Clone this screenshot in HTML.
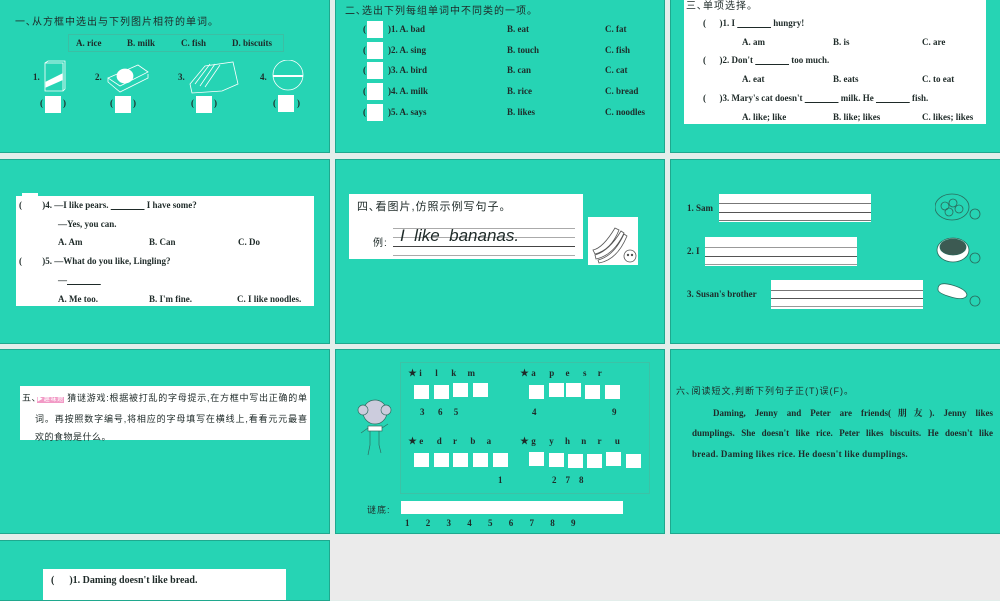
<!DOCTYPE html>
<html><head><meta charset="utf-8"><style>
*{margin:0;padding:0;box-sizing:border-box}
body{width:1000px;height:600px;background:#e3eeeb;position:relative;overflow:hidden;font-family:"Liberation Serif","Noto Serif CJK SC",serif;color:#1e2a28}
.s{position:absolute;background:#26d4b4;border:1px solid #1fa88e}
.a{position:absolute;white-space:nowrap}
.t{font-size:9px;font-weight:bold}
.c{font-family:"Liberation Sans","Noto Sans CJK SC",sans-serif;font-size:10px;letter-spacing:1px}
.w{position:absolute;background:#fff}
.b{position:absolute;background:#fff;width:16px;height:17px}
.sb{position:absolute;background:#fff;width:15px;height:14px}
.j{text-align:justify;text-align-last:justify}
</style></head><body>
<div style="position:absolute;left:330px;top:535px;width:670px;height:65px;background:#ebebeb"></div>
<div class="s" style="left:-1px;top:-1px;width:331px;height:154px"></div>
<div class="s" style="left:335px;top:-1px;width:330px;height:154px"></div>
<div class="s" style="left:670px;top:-1px;width:331px;height:154px"></div>
<div class="s" style="left:-1px;top:159px;width:331px;height:185px"></div>
<div class="s" style="left:335px;top:159px;width:330px;height:185px"></div>
<div class="s" style="left:670px;top:159px;width:331px;height:185px"></div>
<div class="s" style="left:-1px;top:349px;width:331px;height:185px"></div>
<div class="s" style="left:335px;top:349px;width:330px;height:185px"></div>
<div class="s" style="left:670px;top:349px;width:331px;height:185px"></div>
<div class="s" style="left:-1px;top:540px;width:331px;height:61px"></div>

<!-- slide 1 -->
<div class="a c" style="left:15px;top:13px">一､从方框中选出与下列图片相符的单词。</div>
<div class="a" style="left:68px;top:34px;width:216px;height:18px;border:1px solid #3bbfa4"></div>
<div class="a t" style="left:76px;top:38px">A. rice</div>
<div class="a t" style="left:127px;top:38px">B. milk</div>
<div class="a t" style="left:181px;top:38px">C. fish</div>
<div class="a t" style="left:232px;top:38px">D. biscuits</div>
<div class="a t" style="left:33px;top:72px">1.</div>
<div class="a t" style="left:95px;top:72px">2.</div>
<div class="a t" style="left:178px;top:72px">3.</div>
<div class="a t" style="left:260px;top:72px">4.</div>
<svg class="a" style="left:40px;top:60px" width="280" height="36" fill="none" stroke="#fff" stroke-width="0.8">
<path d="M5 3h18v28H5z M5 3l3-2h17v28l-2 2"/><path d="M6 22l16-8v6L6 27z" fill="#fff"/>
<path d="M68 18l30-13 10 7-28 14z M68 18v4l12 10 28-14v-4"/><ellipse cx="85" cy="16" rx="8" ry="7" fill="#fff"/>
<path d="M150 24l15-18 28-4 5 22-16 7-30 2z M155 24l15-20 M160 26l15-22 M165 27l15-22"/>
<circle cx="248" cy="15" r="15"/><path d="M233 16h30" stroke-width="2"/>
</svg>
<div class="a t" style="left:40px;top:98px">(</div><div class="b" style="left:45px;top:96px"></div><div class="a t" style="left:63px;top:98px">)</div>
<div class="a t" style="left:110px;top:98px">(</div><div class="b" style="left:115px;top:96px"></div><div class="a t" style="left:133px;top:98px">)</div>
<div class="a t" style="left:191px;top:98px">(</div><div class="b" style="left:196px;top:96px"></div><div class="a t" style="left:214px;top:98px">)</div>
<div class="a t" style="left:273px;top:98px">(</div><div class="b" style="left:278px;top:95px"></div><div class="a t" style="left:297px;top:98px">)</div>

<!-- slide 2 -->
<div class="a c" style="left:345px;top:2px">二､选出下列每组单词中不同类的一项。</div>
<div class="a t" style="left:363px;top:24px">(</div><div class="b" style="left:367px;top:21px"></div><div class="a t" style="left:388px;top:24px">)1. A. bad</div><div class="a t" style="left:507px;top:24px">B. eat</div><div class="a t" style="left:605px;top:24px">C. fat</div>
<div class="a t" style="left:363px;top:45px">(</div><div class="b" style="left:367px;top:42px"></div><div class="a t" style="left:388px;top:45px">)2. A. sing</div><div class="a t" style="left:507px;top:45px">B. touch</div><div class="a t" style="left:605px;top:45px">C. fish</div>
<div class="a t" style="left:363px;top:65px">(</div><div class="b" style="left:367px;top:62px"></div><div class="a t" style="left:388px;top:65px">)3. A. bird</div><div class="a t" style="left:507px;top:65px">B. can</div><div class="a t" style="left:605px;top:65px">C. cat</div>
<div class="a t" style="left:363px;top:86px">(</div><div class="b" style="left:367px;top:83px"></div><div class="a t" style="left:388px;top:86px">)4. A. milk</div><div class="a t" style="left:507px;top:86px">B. rice</div><div class="a t" style="left:605px;top:86px">C. bread</div>
<div class="a t" style="left:363px;top:107px">(</div><div class="b" style="left:367px;top:104px"></div><div class="a t" style="left:388px;top:107px">)5. A. says</div><div class="a t" style="left:507px;top:107px">B. likes</div><div class="a t" style="left:605px;top:107px">C. noodles</div>

<!-- slide 3 -->
<div class="w" style="left:684px;top:0;width:302px;height:124px"></div>
<div class="a c" style="left:686px;top:-3px">三､单项选择。</div>
<div class="a t" style="left:703px;top:18px">(&nbsp;&nbsp;&nbsp;&nbsp;&nbsp;&nbsp;)1. I <u>&nbsp;&nbsp;&nbsp;&nbsp;&nbsp;&nbsp;&nbsp;&nbsp;&nbsp;&nbsp;&nbsp;&nbsp;&nbsp;&nbsp;&nbsp;</u> hungry!</div>
<div class="a t" style="left:742px;top:37px">A. am</div><div class="a t" style="left:833px;top:37px">B. is</div><div class="a t" style="left:922px;top:37px">C. are</div>
<div class="a t" style="left:703px;top:55px">(&nbsp;&nbsp;&nbsp;&nbsp;&nbsp;&nbsp;)2. Don't <u>&nbsp;&nbsp;&nbsp;&nbsp;&nbsp;&nbsp;&nbsp;&nbsp;&nbsp;&nbsp;&nbsp;&nbsp;&nbsp;&nbsp;&nbsp;</u> too much.</div>
<div class="a t" style="left:742px;top:74px">A. eat</div><div class="a t" style="left:833px;top:74px">B. eats</div><div class="a t" style="left:922px;top:74px">C. to eat</div>
<div class="a t" style="left:703px;top:93px">(&nbsp;&nbsp;&nbsp;&nbsp;&nbsp;&nbsp;)3. Mary's cat doesn't <u>&nbsp;&nbsp;&nbsp;&nbsp;&nbsp;&nbsp;&nbsp;&nbsp;&nbsp;&nbsp;&nbsp;&nbsp;&nbsp;&nbsp;&nbsp;</u> milk. He <u>&nbsp;&nbsp;&nbsp;&nbsp;&nbsp;&nbsp;&nbsp;&nbsp;&nbsp;&nbsp;&nbsp;&nbsp;&nbsp;&nbsp;&nbsp;</u> fish.</div>
<div class="a t" style="left:742px;top:112px">A. like; like</div><div class="a t" style="left:833px;top:112px">B. like; likes</div><div class="a t" style="left:922px;top:112px">C. likes; likes</div>

<!-- slide 4 -->
<div class="w" style="left:16px;top:196px;width:298px;height:110px"></div>
<div class="w" style="left:22px;top:193px;width:16px;height:4px"></div>
<div class="a t" style="left:19px;top:200px">(&nbsp;&nbsp;&nbsp;&nbsp;&nbsp;&nbsp;&nbsp;&nbsp;&nbsp;)4. —I like pears. <u>&nbsp;&nbsp;&nbsp;&nbsp;&nbsp;&nbsp;&nbsp;&nbsp;&nbsp;&nbsp;&nbsp;&nbsp;&nbsp;&nbsp;&nbsp;</u> I have some?</div>
<div class="a t" style="left:58px;top:219px">—Yes, you can.</div>
<div class="a t" style="left:58px;top:237px">A. Am</div><div class="a t" style="left:149px;top:237px">B. Can</div><div class="a t" style="left:238px;top:237px">C. Do</div>
<div class="a t" style="left:19px;top:256px">(&nbsp;&nbsp;&nbsp;&nbsp;&nbsp;&nbsp;&nbsp;&nbsp;&nbsp;)5. —What do you like, Lingling?</div>
<div class="a t" style="left:58px;top:275px">—<u>&nbsp;&nbsp;&nbsp;&nbsp;&nbsp;&nbsp;&nbsp;&nbsp;&nbsp;&nbsp;&nbsp;&nbsp;&nbsp;&nbsp;&nbsp;</u></div>
<div class="a t" style="left:58px;top:294px">A. Me too.</div><div class="a t" style="left:149px;top:294px">B. I'm fine.</div><div class="a t" style="left:237px;top:294px">C. I like noodles.</div>

<!-- slide 5 -->
<div class="w" style="left:349px;top:194px;width:234px;height:65px"></div>
<div class="a c" style="left:357px;top:198px;font-size:11px">四､看图片,仿照示例写句子。</div>
<div class="a c" style="left:373px;top:234px">例:</div>
<div class="a" style="left:393px;top:228px;width:182px;height:1px;background:#aaa"></div>
<div class="a" style="left:393px;top:237px;width:182px;height:1px;background:#aaa"></div>
<div class="a" style="left:393px;top:246px;width:182px;height:1px;background:#444"></div>
<div class="a" style="left:393px;top:255px;width:182px;height:1px;background:#aaa"></div>
<div class="a" style="left:400px;top:226px;font-family:'Liberation Sans',sans-serif;font-style:italic;font-size:17px">I&nbsp; like&nbsp; bananas.</div>
<div class="w" style="left:588px;top:217px;width:50px;height:48px"></div>
<svg class="a" style="left:590px;top:222px" width="48" height="42" fill="none" stroke="#555" stroke-width="0.8">
<path d="M3 28q10-2 22-22l4 2q-8 20-24 24z M5 33q14-4 26-24l3 2q-10 22-28 26z M8 38q16-4 26-26l3 2q-10 24-28 27z"/>
<circle cx="40" cy="34" r="6"/><circle cx="38" cy="33" r=".8" fill="#333"/><circle cx="42" cy="33" r=".8" fill="#333"/>
</svg>

<!-- slide 6 -->
<div class="a t" style="left:687px;top:203px">1. Sam</div>
<div class="w" style="left:719px;top:194px;width:152px;height:28px"></div>
<div class="a" style="left:719px;top:203px;width:152px;height:1px;background:#777"></div><div class="a" style="left:719px;top:212px;width:152px;height:1px;background:#555"></div><div class="a" style="left:719px;top:220px;width:152px;height:1px;background:#777"></div>
<div class="a t" style="left:687px;top:246px">2. I</div>
<div class="w" style="left:705px;top:237px;width:152px;height:29px"></div>
<div class="a" style="left:705px;top:247px;width:152px;height:1px;background:#999"></div><div class="a" style="left:705px;top:256px;width:152px;height:1px;background:#555"></div><div class="a" style="left:705px;top:264px;width:152px;height:1px;background:#999"></div>
<div class="a t" style="left:687px;top:289px">3. Susan's brother</div>
<div class="w" style="left:771px;top:280px;width:152px;height:29px"></div>
<div class="a" style="left:771px;top:290px;width:152px;height:1px;background:#777"></div><div class="a" style="left:771px;top:298px;width:152px;height:1px;background:#555"></div><div class="a" style="left:771px;top:306px;width:152px;height:1px;background:#999"></div>
<svg class="a" style="left:935px;top:192px" width="60" height="130" fill="none" stroke="#2a6a5c" stroke-width="0.8">
<ellipse cx="17" cy="15" rx="17" ry="13"/><circle cx="10" cy="14" r="4"/><circle cx="18" cy="11" r="4"/><circle cx="24" cy="17" r="4"/><circle cx="14" cy="20" r="4"/>
<circle cx="40" cy="22" r="5"/>
<ellipse cx="18" cy="58" rx="16" ry="12" fill="#fff"/><ellipse cx="18" cy="55" rx="13" ry="8" fill="#3c5a52"/>
<circle cx="40" cy="66" r="5"/>
<path d="M3 97q0-8 14-4t15 10q-2 6-16 2t-13-8z" fill="#fff"/>
<circle cx="40" cy="109" r="5"/>
</svg>

<!-- slide 7 -->
<div class="w" style="left:20px;top:386px;width:290px;height:54px"></div>
<div class="a c j" style="left:22px;top:391px;font-size:9px;letter-spacing:0;width:285px">五､<span style="background:#f29ac6;color:#fff;font-size:6px">▶趣味题</span> 猜谜游戏:根据被打乱的字母提示,在方框中写出正确的单</div>
<div class="a c j" style="left:35px;top:412px;font-size:9px;letter-spacing:0;width:272px">词。再按照数字编号,将相应的字母填写在横线上,看看元元最喜</div>
<div class="a c" style="left:35px;top:430px;font-size:9px;letter-spacing:0.5px">欢的食物是什么。</div>

<!-- slide 8 -->
<div class="a" style="left:400px;top:362px;width:250px;height:132px;border:1px solid #3cc2a6"></div>
<svg class="a" style="left:355px;top:398px" width="60" height="62" fill="none" stroke="#2f6d60" stroke-width="0.7">
<circle cx="20" cy="14" r="12" fill="#ccd"/><circle cx="8" cy="12" r="5" fill="#ccd"/><circle cx="31" cy="12" r="5" fill="#ccd"/>
<rect x="13" y="28" width="14" height="5" fill="#fff"/><path d="M15 33v14l-2 10M24 33v14l2 8M13 30l-7 5M27 30l6-4"/>
</svg>
<div class="a t" style="left:408px;top:366px">★ i &nbsp;&nbsp;&nbsp;&nbsp;&nbsp;l &nbsp;&nbsp;&nbsp;&nbsp;&nbsp;k &nbsp;&nbsp;&nbsp;&nbsp;m</div>
<div class="a t" style="left:520px;top:366px">★ a &nbsp;&nbsp;&nbsp;&nbsp;&nbsp;p &nbsp;&nbsp;&nbsp;&nbsp;e &nbsp;&nbsp;&nbsp;&nbsp;&nbsp;s &nbsp;&nbsp;&nbsp;&nbsp;r</div>
<div class="sb" style="left:414px;top:385px"></div><div class="sb" style="left:434px;top:385px"></div><div class="sb" style="left:453px;top:383px"></div><div class="sb" style="left:473px;top:383px"></div>
<div class="sb" style="left:529px;top:385px"></div><div class="sb" style="left:549px;top:383px"></div><div class="sb" style="left:566px;top:383px"></div><div class="sb" style="left:585px;top:385px"></div><div class="sb" style="left:605px;top:385px"></div>
<div class="a t" style="left:420px;top:407px">3 &nbsp;&nbsp;&nbsp;&nbsp;&nbsp;6 &nbsp;&nbsp;&nbsp;&nbsp;5</div>
<div class="a t" style="left:532px;top:407px">4</div><div class="a t" style="left:612px;top:407px">9</div>
<div class="a t" style="left:408px;top:434px">★ e &nbsp;&nbsp;&nbsp;&nbsp;&nbsp;d &nbsp;&nbsp;&nbsp;&nbsp;r &nbsp;&nbsp;&nbsp;&nbsp;&nbsp;b &nbsp;&nbsp;&nbsp;&nbsp;a</div>
<div class="a t" style="left:520px;top:434px">★ g &nbsp;&nbsp;&nbsp;&nbsp;&nbsp;y &nbsp;&nbsp;&nbsp;&nbsp;h &nbsp;&nbsp;&nbsp;&nbsp;n &nbsp;&nbsp;&nbsp;&nbsp;r &nbsp;&nbsp;&nbsp;&nbsp;&nbsp;u</div>
<div class="sb" style="left:414px;top:453px"></div><div class="sb" style="left:434px;top:453px"></div><div class="sb" style="left:453px;top:453px"></div><div class="sb" style="left:473px;top:453px"></div><div class="sb" style="left:493px;top:453px"></div>
<div class="sb" style="left:529px;top:452px"></div><div class="sb" style="left:549px;top:453px"></div><div class="sb" style="left:568px;top:454px"></div><div class="sb" style="left:587px;top:454px"></div><div class="sb" style="left:606px;top:452px"></div><div class="sb" style="left:626px;top:454px"></div>
<div class="a t" style="left:498px;top:475px">1</div>
<div class="a t" style="left:552px;top:475px">2 &nbsp;&nbsp;&nbsp;7 &nbsp;&nbsp;&nbsp;8</div>
<div class="a c" style="left:367px;top:503px;font-size:9px">谜底:</div>
<div class="w" style="left:401px;top:501px;width:222px;height:13px"></div>
<div class="a t" style="left:405px;top:518px;word-spacing:14px">1 2 3 4 5 6 7 8 9</div>

<!-- slide 9 -->
<div class="a c" style="left:676px;top:384px;font-size:9px">六､阅读短文,判断下列句子正(T)误(F)。</div>
<div class="a t j" style="left:713px;top:406px;width:280px">Daming, Jenny and Peter are friends(朋友). Jenny likes</div>
<div class="a t j" style="left:692px;top:428px;width:301px">dumplings. She doesn't like rice. Peter likes biscuits. He doesn't like</div>
<div class="a t" style="left:692px;top:449px;letter-spacing:0.3px">bread. Daming likes rice. He doesn't like dumplings.</div>

<!-- slide 10 -->
<div class="w" style="left:43px;top:569px;width:243px;height:31px"></div>
<div class="a t" style="left:51px;top:575px;font-size:10px">(&nbsp;&nbsp;&nbsp;&nbsp;&nbsp;&nbsp;)1. Daming doesn't like bread.</div>
</body></html>
